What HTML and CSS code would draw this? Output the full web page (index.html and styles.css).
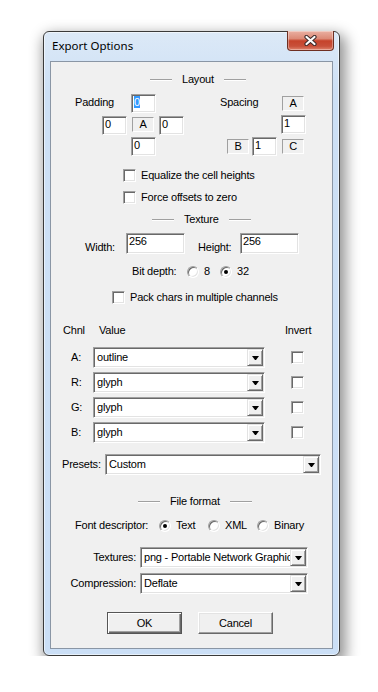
FILE: index.html
```html
<!DOCTYPE html>
<html lang="en">
<head>
    <meta charset="UTF-8">
    <title>Export Options</title>
    <link rel="stylesheet" href="styles.css">
</head>
<body>
    <div class="desk">
        <div class="window">
            <div class="titlebar">
                <span class="title">Export Options</span>
                <div class="close">
                    <svg width="13" height="11" viewBox="0 0 13 11">
                        <path d="M2.5 2 L10.5 9 M10.5 2 L2.5 9" stroke="#3b2a2a" stroke-width="4.2" stroke-linecap="round"/>
                        <path d="M2.5 2 L10.5 9 M10.5 2 L2.5 9" stroke="#fff" stroke-width="2.2" stroke-linecap="round"/>
                    </svg>
                </div>
            </div>

            <div class="client">
                <!-- Layout -->
                <div class="sep sep-layout">Layout</div>

                <div class="offsets">
                    <div class="padding">
                        <span class="lbl pad-lbl">Padding</span>
                        <div class="edit pad-top"><span class="sel">0</span></div>
                        <div class="edit pad-left">0</div>
                        <div class="static pad-a">A</div>
                        <div class="edit pad-right">0</div>
                        <div class="edit pad-bottom">0</div>
                    </div>
                    <div class="spacing">
                        <span class="lbl sp-lbl">Spacing</span>
                        <div class="static sp-a">A</div>
                        <div class="edit sp-v">1</div>
                        <div class="static sp-b">B</div>
                        <div class="edit sp-h">1</div>
                        <div class="static sp-c">C</div>
                    </div>
                </div>

                <div class="check check-eq"><span class="box"></span>Equalize the cell heights</div>
                <div class="check check-force"><span class="box"></span>Force offsets to zero</div>

                <!-- Texture -->
                <div class="sep sep-texture">Texture</div>

                <div class="size">
                    <span class="size-lbl">Width:</span>
                    <div class="edit edit-wide">256</div>
                    <span class="size-lbl size-lbl2">Height:</span>
                    <div class="edit edit-wide">256</div>
                </div>

                <div class="depth">
                    <span class="depth-lbl">Bit depth:</span>
                    <span class="opt opt-8"><span class="radio"></span>8</span>
                    <span class="opt"><span class="radio on"></span>32</span>
                </div>

                <div class="check check-pack"><span class="box"></span>Pack chars in multiple channels</div>

                <!-- Channels -->
                <div class="chan-head">
                    <span class="h-chnl">Chnl</span>
                    <span class="h-value">Value</span>
                    <span class="h-invert">Invert</span>
                </div>
                <div class="channels">
                    <span class="ch-lbl">A:</span>
                    <div class="combo"><span class="combo-text">outline</span><span class="drop"><i></i></span></div>
                    <span class="box ch-box"></span>

                    <span class="ch-lbl">R:</span>
                    <div class="combo"><span class="combo-text">glyph</span><span class="drop"><i></i></span></div>
                    <span class="box ch-box"></span>

                    <span class="ch-lbl">G:</span>
                    <div class="combo"><span class="combo-text">glyph</span><span class="drop"><i></i></span></div>
                    <span class="box ch-box"></span>

                    <span class="ch-lbl">B:</span>
                    <div class="combo"><span class="combo-text">glyph</span><span class="drop"><i></i></span></div>
                    <span class="box ch-box"></span>
                </div>

                <div class="presets">
                    <span class="presets-lbl">Presets:</span>
                    <div class="combo combo-presets"><span class="combo-text">Custom</span><span class="drop"><i></i></span></div>
                </div>

                <!-- File format -->
                <div class="sep sep-file">File format</div>

                <div class="desc">
                    <span class="desc-lbl">Font descriptor:</span>
                    <span class="opt opt-desc"><span class="radio on"></span>Text</span>
                    <span class="opt opt-desc"><span class="radio"></span>XML</span>
                    <span class="opt"><span class="radio"></span>Binary</span>
                </div>

                <div class="field field-tex">
                    <span class="field-lbl">Textures:</span>
                    <div class="combo combo-file"><span class="combo-text">png - Portable Network Graphics</span><span class="drop"><i></i></span></div>
                </div>
                <div class="field field-comp">
                    <span class="field-lbl">Compression:</span>
                    <div class="combo combo-file"><span class="combo-text">Deflate</span><span class="drop"><i></i></span></div>
                </div>

                <div class="buttons">
                    <div class="btn btn-default">OK</div>
                    <div class="btn">Cancel</div>
                </div>
            </div>
        </div>
    </div>
</body>
</html>
```

FILE: styles.css
```css
body {
    margin: 0;
    background: #fff;
    font-family: "Liberation Sans", Arial, sans-serif;
    font-size: 11px;
    line-height: 13px;
    color: #000;
    letter-spacing: -0.2px;
}

.desk {
    padding: 31px 0 0 43px;
}

/* window frame */
.window {
    width: 297px;
    height: 625px;
    box-sizing: border-box;
    border: 1px solid #3a3a3a;
    border-radius: 6px;
    padding: 0 6px 6px;
    background: linear-gradient(#dce9f7, #cde0f5 60px, #cbdff6);
    box-shadow: inset 0 0 0 1px rgba(255,255,255,0.55), 3px 6px 14px 3px rgba(0,0,0,0.42);
}

.titlebar {
    height: 29px;
    display: flex;
    justify-content: space-between;
    align-items: flex-start;
}

.title {
    padding: 6px 0 0 2px;
    font-family: "Noto Sans", "Open Sans", sans-serif;
    font-size: 11.5px;
    line-height: 16px;
    letter-spacing: 0;
}

.close {
    width: 47px;
    height: 20px;
    box-sizing: border-box;
    margin: -1px -1px 0 0;
    border: 1px solid #6e2f22;
    border-top: none;
    border-radius: 0 0 4px 4px;
    background: linear-gradient(#eab0a2, #dc8a77 40%, #c6432b 52%, #c8503a 80%, #e0846d);
    box-shadow: inset 0 0 0 1px rgba(255,255,255,0.35);
    display: flex;
    align-items: center;
    justify-content: center;
}

.client {
    height: 588px;
    box-sizing: border-box;
    border: 1px solid #8a96a5;
    background: #f0f0f0;
}

/* section headers */
.sep {
    display: flex;
    align-items: center;
    gap: 10px;
    height: 13px;
}

.sep::before,
.sep::after {
    content: "";
    width: 22px;
    border-top: 1px solid #a0a0a0;
    border-bottom: 1px solid #fff;
}

.sep-layout { margin: 11px 0 0 99px; }
.sep-texture { margin: 9px 0 0 101px; }
.sep-file { margin: 20px 0 0 87px; }

/* 3d controls */
.edit {
    box-sizing: border-box;
    width: 25px;
    height: 19px;
    padding: 1px 0 0 1px;
    background: #fff;
    border: 1px solid;
    border-color: #a0a0a0 #fff #fff #a0a0a0;
    box-shadow: inset 1px 1px 0 #696969, inset -1px -1px 0 #e3e3e3;
    white-space: nowrap;
}

.edit > *:first-child,
.edit {
    text-indent: 1px;
}

.sel {
    background: #3399ff;
    color: #fff;
}

.static {
    box-sizing: border-box;
    width: 22px;
    height: 15px;
    border: 1px solid;
    border-color: #a0a0a0 #fff #fff #a0a0a0;
    text-align: center;
}

.box {
    flex: none;
    box-sizing: border-box;
    width: 13px;
    height: 13px;
    background: #fff;
    border: 1px solid;
    border-color: #a0a0a0 #fff #fff #a0a0a0;
    box-shadow: inset 1px 1px 0 #696969, inset -1px -1px 0 #e3e3e3;
}

.radio {
    flex: none;
    position: relative;
    box-sizing: border-box;
    width: 12px;
    height: 12px;
    border-radius: 50%;
    background: #fff;
    border: 1px solid;
    border-color: #a0a0a0 #fff #fff #a0a0a0;
    box-shadow: inset 1px 1px 0 #696969, inset -1px -1px 0 #e3e3e3;
}

.radio.on::after {
    content: "";
    position: absolute;
    left: 3px;
    top: 3px;
    width: 4px;
    height: 4px;
    border-radius: 50%;
    background: #000;
}

.combo {
    display: flex;
    box-sizing: border-box;
    width: 172px;
    height: 21px;
    padding: 1px;
    background: #fff;
    border: 1px solid;
    border-color: #a0a0a0 #fff #fff #a0a0a0;
    box-shadow: inset 1px 1px 0 #696969, inset -1px -1px 0 #e3e3e3;
}

.combo-text {
    flex: 1;
    min-width: 0;
    padding-left: 2px;
    line-height: 17px;
    overflow: hidden;
    white-space: nowrap;
}

.drop {
    flex: none;
    box-sizing: border-box;
    width: 16px;
    height: 17px;
    background: #f0f0f0;
    border: 1px solid;
    border-color: #e3e3e3 #696969 #696969 #e3e3e3;
    box-shadow: inset 1px 1px 0 #fff, inset -1px -1px 0 #a0a0a0;
    display: flex;
    align-items: center;
    justify-content: center;
}

.drop i {
    width: 1px;
    height: 0;
    margin-top: 1px;
    border-left: 3px solid transparent;
    border-right: 3px solid transparent;
    border-top: 4px solid #000;
}

/* layout block */
.offsets {
    display: flex;
    margin: 8px 0 0 24px;
}

.padding {
    display: grid;
    grid-template-columns: 27px 29px 28px 25px;
    grid-template-rows: 22px 21px 19px;
    align-items: start;
}

.lbl { padding-top: 2px; }

.pad-lbl { grid-column: 1 / 3; grid-row: 1; }
.pad-top { grid-column: 3; grid-row: 1; }
.pad-left { grid-column: 2; grid-row: 2; }
.pad-a { grid-column: 3; grid-row: 2; margin: 1px 0 0 1px; }
.pad-right { grid-column: 4; grid-row: 2; }
.pad-bottom { grid-column: 3; grid-row: 3; }

.spacing {
    display: grid;
    grid-template-columns: 32px 29px 25px;
    grid-template-rows: 22px 21px 19px;
    align-items: start;
    margin-left: 36px;
}

.sp-lbl { grid-column: 1 / 3; grid-row: 1; }
.sp-a { grid-column: 3; grid-row: 1; margin: 2px 0 0 1px; }
.sp-v { grid-column: 3; grid-row: 2; margin-top: -1px; }
.sp-b { grid-column: 1; grid-row: 3; justify-self: end; margin: 2px 3px 0 0; }
.sp-h { grid-column: 2; grid-row: 3; }
.sp-c { grid-column: 3; grid-row: 3; margin: 2px 0 0 1px; }

.check {
    display: flex;
    align-items: center;
    gap: 5px;
    height: 13px;
}

.check-eq { margin: 13px 0 0 72px; }
.check-force { margin: 9px 0 0 72px; }
.check-pack { margin: 13px 0 0 61px; }

/* texture block */
.size {
    display: flex;
    align-items: flex-start;
    margin: 7px 0 0 34px;
}

.size-lbl {
    width: 41px;
    padding-top: 8px;
}

.size-lbl2 {
    width: 42px;
    margin-left: 13px;
}

.edit-wide {
    width: 59px;
    height: 21px;
}

.depth {
    display: flex;
    align-items: center;
    height: 13px;
    margin: 11px 0 0 81px;
}

.depth-lbl { width: 55px; }

.opt {
    display: flex;
    align-items: center;
    gap: 5px;
}

.opt-8 { width: 33px; }

/* channels */
.chan-head,
.channels {
    display: grid;
    grid-template-columns: 42px 172px 1fr;
    align-items: center;
}

.chan-head {
    height: 13px;
    margin-top: 20px;
}

.h-chnl { margin-left: 12px; }
.h-value { margin-left: 6px; }
.h-invert { margin-left: 20px; }

.channels {
    grid-auto-rows: 21px;
    row-gap: 4px;
    margin-top: 10px;
}

.ch-lbl { margin-left: 20px; }
.ch-box { margin-left: 26px; }

.presets {
    display: flex;
    align-items: center;
    margin: 11px 0 0 11px;
}

.presets-lbl { width: 43px; }
.combo-presets { width: 216px; }

/* file format */
.desc {
    display: flex;
    align-items: center;
    height: 13px;
    margin: 11px 0 0 24px;
}

.desc-lbl { width: 84px; }
.opt-desc { width: 49px; }

.field {
    display: flex;
    align-items: center;
    gap: 4px;
}

.field-lbl {
    width: 85px;
    text-align: right;
}

.field-tex { margin-top: 15px; }
.field-comp { margin-top: 5px; }
.combo-file { width: 168px; }

/* buttons */
.buttons {
    display: flex;
    gap: 16px;
    margin: 18px 0 0 56px;
}

.btn {
    box-sizing: border-box;
    width: 75px;
    height: 22px;
    line-height: 20px;
    text-align: center;
    background: #f0f0f0;
    border: 1px solid;
    border-color: #fff #696969 #696969 #fff;
    box-shadow: inset -1px -1px 0 #a0a0a0, inset 1px 1px 0 #e3e3e3;
}

.btn-default {
    border-color: #555;
    box-shadow: inset 1px 1px 0 #fff, inset -1px -1px 0 #696969, inset -2px -2px 0 #a0a0a0;
}
```
